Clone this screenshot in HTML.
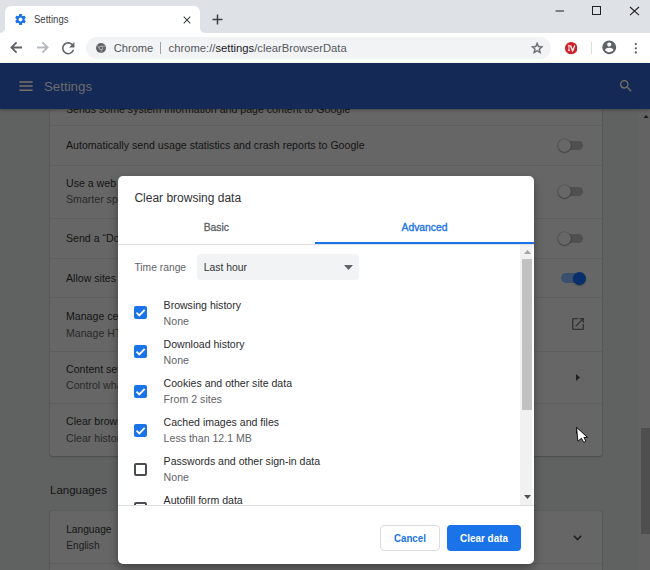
<!DOCTYPE html><html><head><meta charset="utf-8"><style>
html,body{margin:0;padding:0;width:650px;height:570px;overflow:hidden;background:#606060;position:relative}
body{font-family:"Liberation Sans",sans-serif}
.t{position:absolute;white-space:nowrap}
</style></head><body>
<div style="position:absolute;left:0px;top:0px;width:650px;height:33px;background:#dee1e6"></div>
<div style="position:absolute;left:0px;top:27px;width:206px;height:6px;background:#fff"></div>
<div style="position:absolute;left:0px;top:20px;width:5px;height:13px;background:#dee1e6;border-bottom-right-radius:5px"></div>
<div style="position:absolute;left:200px;top:20px;width:10px;height:13px;background:#dee1e6;border-bottom-left-radius:5px"></div>
<div style="position:absolute;left:5px;top:6px;width:195px;height:27px;background:#fff;border-radius:6px 6px 0 0"></div>
<svg style="position:absolute;left:14.4px;top:12.85px" width="13" height="13" viewBox="0 0 24 24"><path fill="#1a73e8" d="M19.43 12.98c.04-.32.07-.64.07-.98s-.03-.66-.07-.98l2.11-1.65c.19-.15.24-.42.12-.64l-2-3.46c-.12-.22-.39-.3-.61-.22l-2.49 1c-.52-.4-1.08-.73-1.69-.98l-.38-2.65C14.46 2.18 14.25 2 14 2h-4c-.25 0-.46.18-.49.42l-.38 2.65c-.61.25-1.17.59-1.69.98l-2.49-1c-.23-.09-.49 0-.61.22l-2 3.46c-.13.22-.07.49.12.64l2.11 1.65c-.04.32-.07.65-.07.98s.03.66.07.98l-2.11 1.65c-.19.15-.24.42-.12.64l2 3.46c.12.22.39.3.61.22l2.49-1c.52.4 1.08.73 1.69.98l.38 2.65c.03.24.24.42.49.42h4c.25 0 .46-.18.49-.42l.38-2.65c.61-.25 1.170-.59 1.69-.98l2.49 1c.23.09.49 0 .61-.22l2-3.46c.12-.22.07-.49-.12-.64l-2.11-1.65zM12 15.5c-1.93 0-3.5-1.57-3.5-3.5s1.57-3.5 3.5-3.5 3.5 1.57 3.5 3.5-1.57 3.5-3.5 3.5z"/></svg>
<div class="t" style="left:34px;top:14.54px;font-size:10px;line-height:10px;color:#3c4043;font-weight:400;transform:scaleX(0.955);transform-origin:0 0">Settings</div>
<svg style="position:absolute;left:183px;top:16px" width="8" height="8" viewBox="0 0 8 8"><path d="M0.7 0.7L7.3 7.3M7.3 0.7L0.7 7.3" stroke="#3c4043" stroke-width="1.1"/></svg>
<svg style="position:absolute;left:212px;top:14px" width="11" height="11" viewBox="0 0 11 11"><path d="M5.5 0.5V10.5M0.5 5.5H10.5" stroke="#3c4043" stroke-width="1.5"/></svg>
<svg style="position:absolute;left:550px;top:5px" width="20" height="12" viewBox="550 5 20 12"><path d="M555.6 11H564" stroke="#303134" stroke-width="1.1"/></svg>
<div style="position:absolute;left:592px;top:6.2px;width:9.3px;height:9px;border:1.2px solid #202124;box-sizing:border-box"></div>
<svg style="position:absolute;left:629px;top:6px" width="11" height="10" viewBox="0 0 11 10"><path d="M1 1L10 9.2M10 1L1 9.2" stroke="#202124" stroke-width="1.1"/></svg>
<div style="position:absolute;left:0px;top:33px;width:650px;height:30px;background:#fff"></div>
<svg style="position:absolute;left:10px;top:41.2px" width="13" height="13" viewBox="0 0 13 13"><path d="M12 6.5H1.8M6.6 1.3L1.4 6.5L6.6 11.7" fill="none" stroke="#5f6368" stroke-width="1.8"/></svg>
<svg style="position:absolute;left:35.5px;top:41.2px" width="13" height="13" viewBox="0 0 13 13"><path d="M1 6.5H11.2M6.4 1.3L11.6 6.5L6.4 11.7" fill="none" stroke="#b5b9be" stroke-width="1.8"/></svg>
<svg style="position:absolute;left:59.3px;top:39px" width="18.5" height="18.5" viewBox="0 0 24 24"><path fill="#5f6368" d="M17.65 6.35A7.958 7.958 0 0 0 12 4c-4.42 0-7.99 3.58-7.99 8s3.57 8 7.99 8c3.73 0 6.84-2.55 7.73-6h-2.08A5.99 5.99 0 0 1 12 18c-3.31 0-6-2.69-6-6s2.69-6 6-6c1.66 0 3.14.69 4.22 1.78L13 11h7V4l-2.35 2.35z"/></svg>
<div style="position:absolute;left:86px;top:37px;width:465px;height:22px;background:#f1f3f4;border-radius:11px"></div>
<svg style="position:absolute;left:95.9px;top:42.9px" width="10" height="10" viewBox="0 0 24 24"><circle cx="12" cy="12" r="12" fill="#5f6368"/><path d="M12 7.8L22.5 7.8M15.64 14.1L10.4 23.2M8.36 14.1L3.1 5" stroke="#c8cacc" stroke-width="1.6"/><circle cx="12" cy="12" r="4.6" fill="#c8cacc"/><circle cx="12" cy="12" r="3.2" fill="#5f6368"/></svg>
<div class="t" style="left:113.8px;top:43.00px;font-size:11.1px;line-height:11.1px;color:#51555a;font-weight:400;">Chrome</div>
<div style="position:absolute;left:160px;top:42px;width:1px;height:12px;background:#9aa0a6"></div>
<div class="t" style="left:168.5px;top:42.78px;font-size:11.25px;line-height:11.25px;color:#202124;font-weight:400;"><span style="color:#55595e">chrome://</span>settings<span style="color:#55595e">/clearBrowserData</span></div>
<svg style="position:absolute;left:529.8px;top:41.4px" width="14.3" height="14.3" viewBox="0 0 24 24"><path fill="#5f6368" stroke="#5f6368" stroke-width="0.7" d="M22 9.24l-7.19-.62L12 2 9.19 8.63 2 9.24l5.46 4.73L5.82 21 12 17.27 18.18 21l-1.63-7.03L22 9.24zM12 15.4l-3.76 2.27 1-4.28-3.32-2.88 4.38-.38L12 6.1l1.71 4.04 4.38.38-3.32 2.88 1 4.28L12 15.4z"/></svg>
<svg style="position:absolute;left:565px;top:41.8px" width="12.4" height="12.4" viewBox="0 0 12.4 12.4"><circle cx="6.2" cy="6.2" r="6.2" fill="#d1222b"/><path d="M2.9 3.7H5.1M4 3.7V8.3M2.9 8.3H5.1" stroke="#fff" stroke-width="0.9" fill="none"/><path d="M5.5 3.5L7.6 8.8L9.8 3.5" stroke="#fff" stroke-width="1.3" fill="none"/></svg>
<div style="position:absolute;left:591px;top:42px;width:1px;height:12px;background:#dadce0"></div>
<svg style="position:absolute;left:601.2px;top:39.4px" width="16.5" height="16.5" viewBox="0 0 24 24"><path fill="#5f6368" d="M12 2C6.48 2 2 6.48 2 12s4.48 10 10 10 10-4.48 10-10S17.52 2 12 2zm0 3c1.66 0 3 1.34 3 3s-1.34 3-3 3-3-1.34-3-3 1.34-3 3-3zm0 14.2c-2.5 0-4.71-1.28-6-3.22.03-1.99 4-3.08 6-3.08 1.99 0 5.97 1.09 6 3.08-1.29 1.94-3.5 3.22-6 3.22z"/></svg>
<svg style="position:absolute;left:630px;top:38px" width="12" height="20" viewBox="630 38 12 20"><circle cx="635.8" cy="44.1" r="1.15" fill="#5f6368"/><circle cx="635.8" cy="48.3" r="1.15" fill="#5f6368"/><circle cx="635.8" cy="52.5" r="1.15" fill="#5f6368"/></svg>
<div style="position:absolute;left:0px;top:63px;width:650px;height:507px;background:#606262"></div>
<div style="position:absolute;left:638px;top:108.5px;width:12px;height:461.5px;background:#636363"></div>
<div style="position:absolute;left:641px;top:428px;width:9px;height:106px;background:#4f4f4f"></div>
<svg style="position:absolute;left:643.1px;top:114.5px" width="6.2" height="3.5" viewBox="0 0 6.2 3.5"><path d="M0 3.5L3.1 0L6.2 3.5Z" fill="#1c1c1c"/></svg>
<div style="position:absolute;left:50px;top:100px;width:552px;height:356px;background:#666666;border-radius:2px;box-shadow:0 0 1px rgba(0,0,0,0.35),0 1px 2px rgba(0,0,0,0.2)"></div>
<div class="t" style="left:66px;top:103.63px;font-size:10.6px;line-height:10.6px;color:#141414;font-weight:400;">Sends some system information and page content to Google</div>
<div style="position:absolute;left:50px;top:125px;width:552px;height:1px;background:#5e5e5e"></div>
<div class="t" style="left:66px;top:140.23px;font-size:10.6px;line-height:10.6px;color:#141414;font-weight:400;">Automatically send usage statistics and crash reports to Google</div>
<div style="position:absolute;left:50px;top:165px;width:552px;height:1px;background:#5e5e5e"></div>
<div class="t" style="left:66px;top:178.43px;font-size:10.6px;line-height:10.6px;color:#141414;font-weight:400;">Use a web service to help resolve spelling errors</div>
<div class="t" style="left:66px;top:194.43px;font-size:10.6px;line-height:10.6px;color:#292929;font-weight:400;">Smarter spell-checking by sending what you type in the browser to Google</div>
<div style="position:absolute;left:50px;top:218px;width:552px;height:1px;background:#5e5e5e"></div>
<div class="t" style="left:66px;top:232.73px;font-size:10.6px;line-height:10.6px;color:#141414;font-weight:400;">Send a “Do Not Track” request with your browsing traffic</div>
<div style="position:absolute;left:50px;top:258px;width:552px;height:1px;background:#5e5e5e"></div>
<div class="t" style="left:66px;top:272.63px;font-size:10.6px;line-height:10.6px;color:#141414;font-weight:400;">Allow sites to check if you have payment methods saved</div>
<div style="position:absolute;left:50px;top:297px;width:552px;height:1px;background:#5e5e5e"></div>
<div class="t" style="left:66px;top:311.23px;font-size:10.6px;line-height:10.6px;color:#141414;font-weight:400;">Manage certificates</div>
<div class="t" style="left:66px;top:327.63px;font-size:10.6px;line-height:10.6px;color:#292929;font-weight:400;">Manage HTTPS/SSL certificates and settings</div>
<div style="position:absolute;left:50px;top:351px;width:552px;height:1px;background:#5e5e5e"></div>
<div class="t" style="left:66px;top:363.93px;font-size:10.6px;line-height:10.6px;color:#141414;font-weight:400;">Content settings</div>
<div class="t" style="left:66px;top:380.43px;font-size:10.6px;line-height:10.6px;color:#292929;font-weight:400;">Control what information websites can use and what content they can show you</div>
<div style="position:absolute;left:50px;top:403px;width:552px;height:1px;background:#5e5e5e"></div>
<div class="t" style="left:66px;top:416.43px;font-size:10.6px;line-height:10.6px;color:#141414;font-weight:400;">Clear browsing data</div>
<div class="t" style="left:66px;top:432.93px;font-size:10.6px;line-height:10.6px;color:#292929;font-weight:400;">Clear history, cookies, cache, and more</div>
<div style="position:absolute;left:562px;top:141.4px;width:21px;height:9px;background:#505050;border-radius:5px"></div>
<div style="position:absolute;left:557.8px;top:139.3px;width:13.2px;height:13.2px;background:#676767;border-radius:50%;box-shadow:0 0 0 0.6px rgba(0,0,0,0.22),0 1px 1.5px rgba(0,0,0,0.3);box-sizing:border-box"></div>
<div style="position:absolute;left:562px;top:187.4px;width:21px;height:9px;background:#505050;border-radius:5px"></div>
<div style="position:absolute;left:557.8px;top:185.3px;width:13.2px;height:13.2px;background:#676767;border-radius:50%;box-shadow:0 0 0 0.6px rgba(0,0,0,0.22),0 1px 1.5px rgba(0,0,0,0.3);box-sizing:border-box"></div>
<div style="position:absolute;left:562px;top:233.9px;width:21px;height:9px;background:#505050;border-radius:5px"></div>
<div style="position:absolute;left:557.8px;top:231.8px;width:13.2px;height:13.2px;background:#676767;border-radius:50%;box-shadow:0 0 0 0.6px rgba(0,0,0,0.22),0 1px 1.5px rgba(0,0,0,0.3);box-sizing:border-box"></div>
<div style="position:absolute;left:560.7px;top:273.3px;width:21px;height:9.6px;background:#3b4f6e;border-radius:5px"></div>
<div style="position:absolute;left:572.9px;top:271.5px;width:13.2px;height:13.2px;background:#082f6c;border-radius:50%;box-shadow:0 1px 1.5px rgba(0,0,0,0.3)"></div>
<svg style="position:absolute;left:569.8px;top:316.2px" width="16" height="16" viewBox="0 0 24 24"><path fill="#333333" d="M19 19H5V5h7V3H5a2 2 0 0 0-2 2v14a2 2 0 0 0 2 2h14c1.1 0 2-.9 2-2v-7h-2v7zM14 3v2h3.59l-9.83 9.83 1.41 1.41L19 6.41V10h2V3h-7z"/></svg>
<svg style="position:absolute;left:575.8px;top:374px" width="4" height="7" viewBox="0 0 4 7"><path d="M0 0L4 3.5L0 7Z" fill="#202020"/></svg>
<svg style="position:absolute;left:575.8px;top:427px" width="4" height="7" viewBox="0 0 4 7"><path d="M0 0L4 3.5L0 7Z" fill="#202020"/></svg>
<div class="t" style="left:50px;top:484.77px;font-size:11.5px;line-height:11.5px;color:#141414;font-weight:400;letter-spacing:0px">Languages</div>
<div style="position:absolute;left:50px;top:511px;width:552px;height:80px;background:#666666;border-radius:2px;box-shadow:0 0 1px rgba(0,0,0,0.35),0 1px 2px rgba(0,0,0,0.2)"></div>
<div class="t" style="left:66.2px;top:524.67px;font-size:10.2px;line-height:10.2px;color:#141414;font-weight:400;">Language</div>
<div class="t" style="left:66.2px;top:541.37px;font-size:10.2px;line-height:10.2px;color:#202020;font-weight:400;">English</div>
<div style="position:absolute;left:50px;top:563px;width:552px;height:1px;background:#5e5e5e"></div>
<svg style="position:absolute;left:573px;top:534.8px" width="9" height="6" viewBox="0 0 9 6"><path d="M0.8 0.8L4.5 4.6L8.2 0.8" fill="none" stroke="#202020" stroke-width="1.6"/></svg>
<div style="position:absolute;left:0px;top:63px;width:650px;height:45.9px;background:#142956;box-shadow:0 1px 3px rgba(0,0,0,0.3)"></div>
<svg style="position:absolute;left:0;top:63px" width="40" height="45" viewBox="0 63 40 45"><path d="M19.4 82.1H32.6M19.4 86.1H32.6M19.4 90.2H32.6" stroke="#7a7363" stroke-width="1.5"/></svg>
<div class="t" style="left:44px;top:79.94px;font-size:13.3px;line-height:13.3px;color:#6c6c6c;font-weight:400;">Settings</div>
<svg style="position:absolute;left:617.5px;top:77.8px" width="16" height="16" viewBox="0 0 24 24"><path fill="#747062" d="M15.5 14h-.79l-.28-.27A6.471 6.471 0 0 0 16 9.5 6.5 6.5 0 1 0 9.5 16c1.61 0 3.09-.59 4.23-1.57l.27.28v.79l5 4.99L20.49 19l-4.99-5zm-6 0C7.01 14 5 11.99 5 9.5S7.01 5 9.5 5 14 7.01 14 9.5 11.99 14 9.5 14z"/></svg>
<div style="position:absolute;left:118px;top:176px;width:416px;height:388px;background:#fff;border-radius:5px;box-shadow:0 4px 10px rgba(0,0,0,0.35)"></div>
<div class="t" style="left:134.4px;top:192.34px;font-size:12px;line-height:12px;color:#303134;font-weight:400;">Clear browsing data</div>
<div class="t" style="left:203.7px;top:222.88px;font-size:10.3px;line-height:10.3px;color:#5f6368;font-weight:400;-webkit-text-stroke:0.3px #5f6368">Basic</div>
<div class="t" style="left:401.5px;top:222.84px;font-size:10.35px;line-height:10.35px;color:#1a73e8;font-weight:400;-webkit-text-stroke:0.35px #1a73e8">Advanced</div>
<div style="position:absolute;left:118px;top:244px;width:416px;height:1px;background:#e0e0e0"></div>
<div style="position:absolute;left:315px;top:242px;width:219px;height:2px;background:#1a73e8"></div>
<div class="t" style="left:134.4px;top:262.88px;font-size:10.3px;line-height:10.3px;color:#5f6368;font-weight:400;">Time range</div>
<div style="position:absolute;left:197px;top:254.2px;width:162px;height:26px;background:#f1f3f4;border-radius:4px"></div>
<div class="t" style="left:203.7px;top:262.80px;font-size:10.4px;line-height:10.4px;color:#333438;font-weight:400;">Last hour</div>
<svg style="position:absolute;left:344px;top:265px" width="9" height="5" viewBox="0 0 9 5"><path d="M0 0H9L4.5 5Z" fill="#5f6368"/></svg>
<div style="position:absolute;left:520px;top:245px;width:12px;height:260px;background:#f1f1f1"></div>
<div style="position:absolute;left:522px;top:258.5px;width:9.5px;height:151px;background:#c1c1c1"></div>
<svg style="position:absolute;left:523.5px;top:250px" width="7" height="4" viewBox="0 0 7 4"><path d="M0 4L3.5 0L7 4Z" fill="#a3a3a3"/></svg>
<svg style="position:absolute;left:523.5px;top:495px" width="7" height="4" viewBox="0 0 7 4"><path d="M0 0L3.5 4L7 0Z" fill="#505050"/></svg>
<div style="position:absolute;left:118px;top:245px;width:402px;height:260px;overflow:hidden">
<div style="position:absolute;left:16px;top:61.30000000000001px;width:13px;height:13px;background:#1a73e8;border-radius:2px"><svg width="13" height="13" viewBox="0 0 13 13" style="position:absolute;left:0;top:0"><path d="M2.5 6.7L5.3 9.4L10.7 3.8" fill="none" stroke="#fff" stroke-width="1.8"/></svg></div>
<div class="t" style="left:45.6px;top:54.77px;font-size:10.55px;line-height:10.55px;color:#2a2b2e;font-weight:400;">Browsing history</div>
<div class="t" style="left:45.6px;top:70.53px;font-size:10.6px;line-height:10.6px;color:#5f6368;font-weight:400;">None</div>
<div style="position:absolute;left:16px;top:100.40000000000003px;width:13px;height:13px;background:#1a73e8;border-radius:2px"><svg width="13" height="13" viewBox="0 0 13 13" style="position:absolute;left:0;top:0"><path d="M2.5 6.7L5.3 9.4L10.7 3.8" fill="none" stroke="#fff" stroke-width="1.8"/></svg></div>
<div class="t" style="left:45.6px;top:93.77px;font-size:10.55px;line-height:10.55px;color:#2a2b2e;font-weight:400;">Download history</div>
<div class="t" style="left:45.6px;top:109.53px;font-size:10.6px;line-height:10.6px;color:#5f6368;font-weight:400;">None</div>
<div style="position:absolute;left:16px;top:139.5px;width:13px;height:13px;background:#1a73e8;border-radius:2px"><svg width="13" height="13" viewBox="0 0 13 13" style="position:absolute;left:0;top:0"><path d="M2.5 6.7L5.3 9.4L10.7 3.8" fill="none" stroke="#fff" stroke-width="1.8"/></svg></div>
<div class="t" style="left:45.6px;top:132.77px;font-size:10.55px;line-height:10.55px;color:#2a2b2e;font-weight:400;">Cookies and other site data</div>
<div class="t" style="left:45.6px;top:148.53px;font-size:10.6px;line-height:10.6px;color:#5f6368;font-weight:400;">From 2 sites</div>
<div style="position:absolute;left:16px;top:178.60000000000002px;width:13px;height:13px;background:#1a73e8;border-radius:2px"><svg width="13" height="13" viewBox="0 0 13 13" style="position:absolute;left:0;top:0"><path d="M2.5 6.7L5.3 9.4L10.7 3.8" fill="none" stroke="#fff" stroke-width="1.8"/></svg></div>
<div class="t" style="left:45.6px;top:171.77px;font-size:10.55px;line-height:10.55px;color:#2a2b2e;font-weight:400;">Cached images and files</div>
<div class="t" style="left:45.6px;top:187.53px;font-size:10.6px;line-height:10.6px;color:#5f6368;font-weight:400;">Less than 12.1 MB</div>
<div style="position:absolute;left:16px;top:217.70000000000005px;width:13px;height:13px;border:2px solid #4a4d51;border-radius:2px;box-sizing:border-box"></div>
<div class="t" style="left:45.6px;top:210.77px;font-size:10.55px;line-height:10.55px;color:#2a2b2e;font-weight:400;">Passwords and other sign-in data</div>
<div class="t" style="left:45.6px;top:226.53px;font-size:10.6px;line-height:10.6px;color:#5f6368;font-weight:400;">None</div>
<div style="position:absolute;left:16px;top:256.8px;width:13px;height:13px;border:2px solid #4a4d51;border-radius:2px;box-sizing:border-box"></div>
<div class="t" style="left:45.6px;top:249.77px;font-size:10.55px;line-height:10.55px;color:#2a2b2e;font-weight:400;">Autofill form data</div>
</div>
<div style="position:absolute;left:118px;top:505px;width:416px;height:1px;background:#dadce0"></div>
<div style="position:absolute;left:380px;top:525px;width:59.6px;height:26px;border:1px solid #dadce0;border-radius:4px;box-sizing:border-box;background:#fff"></div>
<div class="t" style="left:394px;top:533.06px;font-size:10.8px;line-height:10.8px;color:#1a73e8;font-weight:700;transform:scaleX(0.9);transform-origin:0 0">Cancel</div>
<div style="position:absolute;left:447px;top:525px;width:74px;height:26px;background:#1a73e8;border-radius:4px"></div>
<div class="t" style="left:459.7px;top:532.86px;font-size:10.8px;line-height:10.8px;color:#fff;font-weight:700;transform:scaleX(0.92);transform-origin:0 0">Clear data</div>
<svg style="position:absolute;left:570px;top:420px" width="25" height="28" viewBox="570 420 25 28"><path d="M576.6 427.4L577.9 441.3L581.4 438.2L583.8 442.4L585.9 441.1L583.9 437.5L587.4 437.3Z" fill="#fff" stroke="#000" stroke-width="0.9" stroke-linejoin="miter"/></svg>
</body></html>
